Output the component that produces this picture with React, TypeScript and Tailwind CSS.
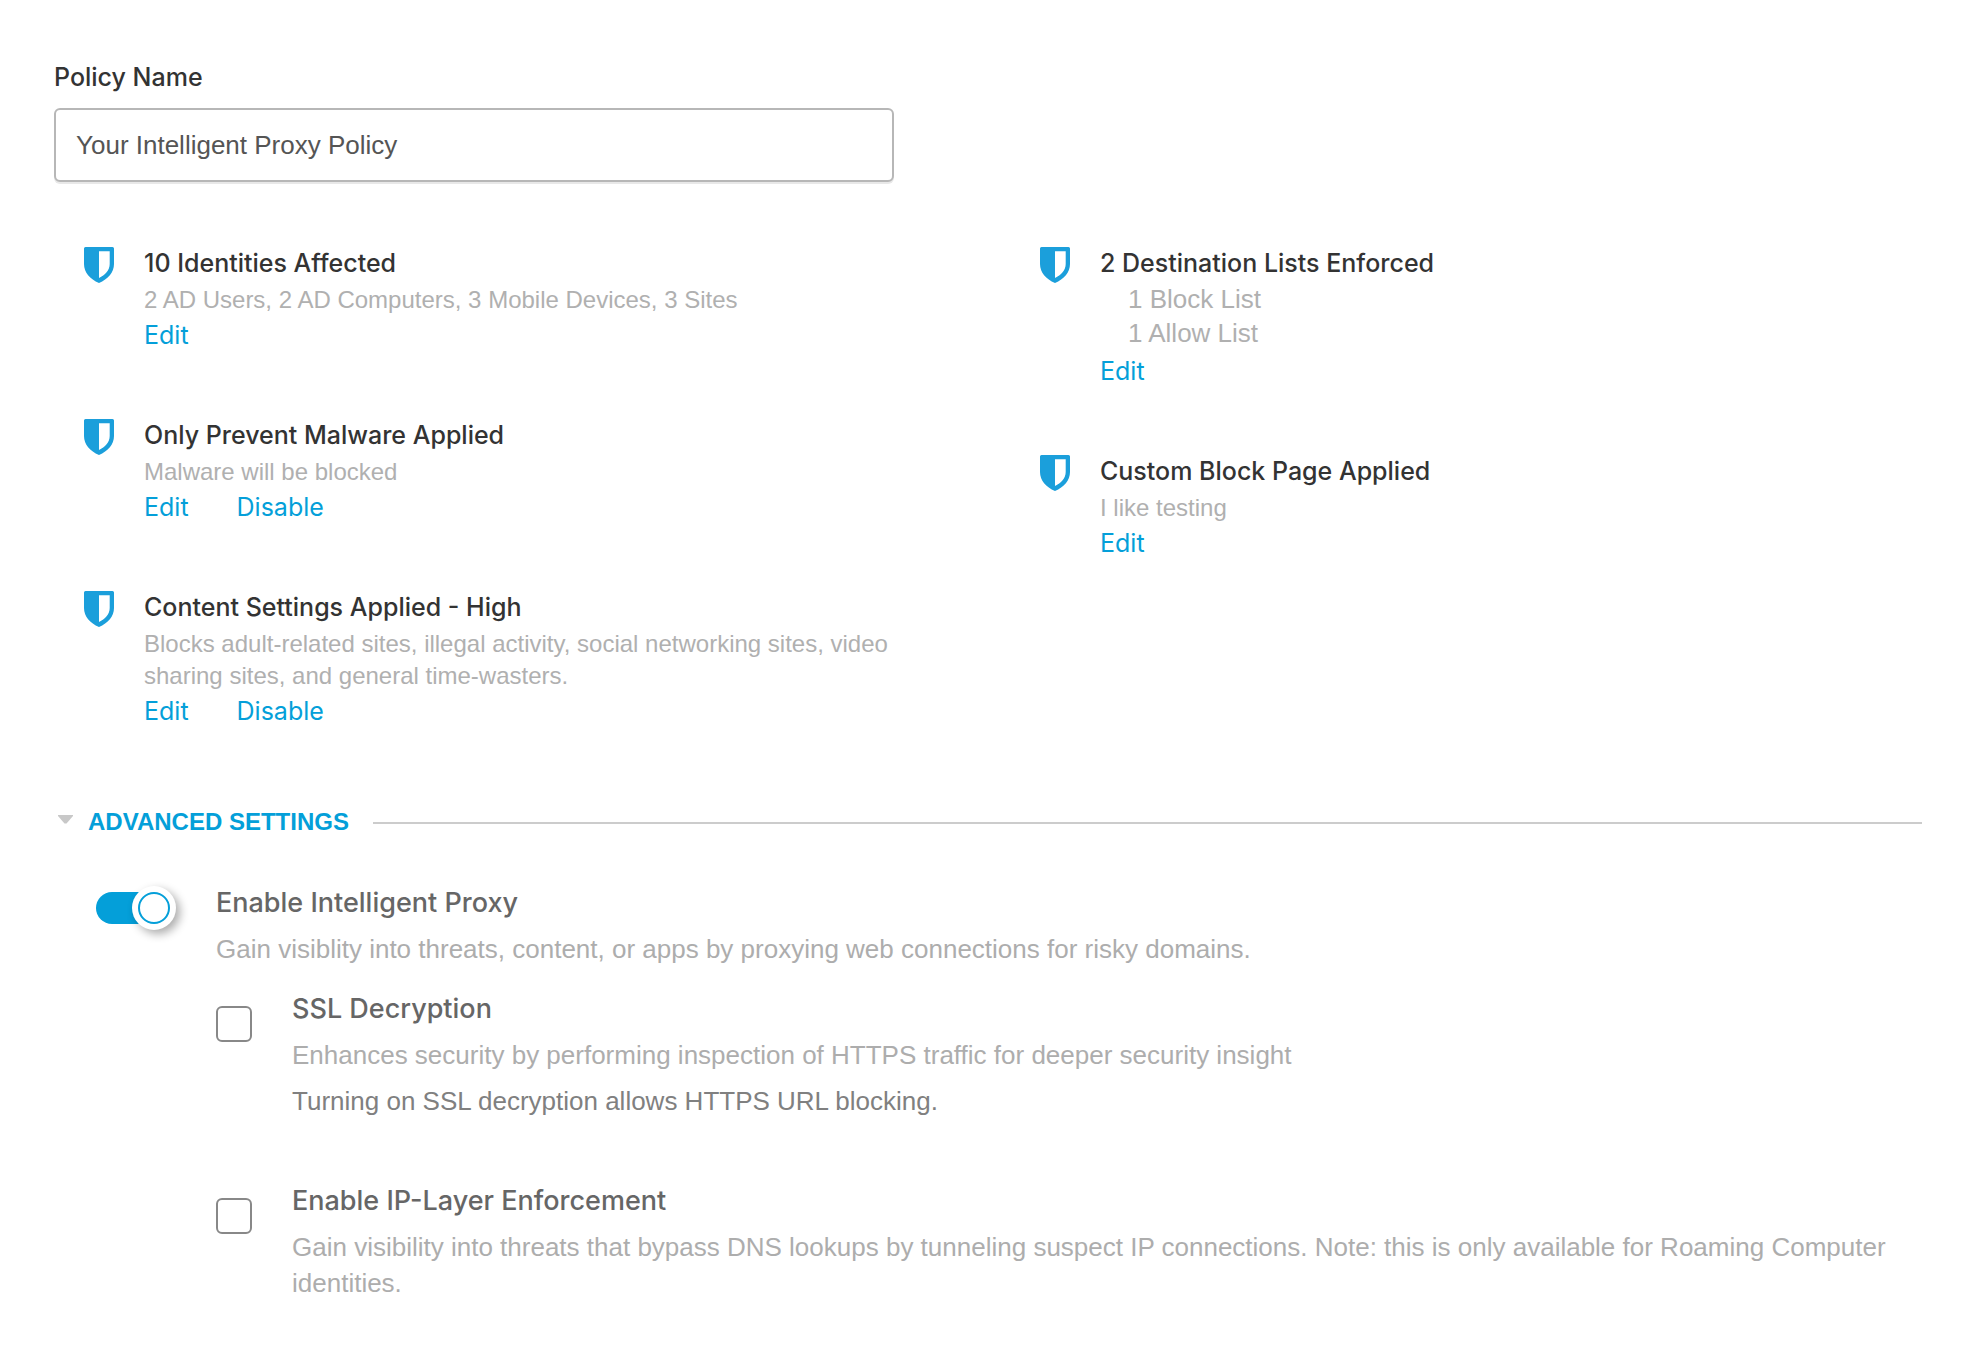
import { useId, useState, type ReactNode } from "react";

function Shield() {
  return (
    <svg viewBox="0 0 30 36" className="mt-0.5 h-9 w-[30px] shrink-0" aria-hidden="true">
      <path
        fill="#1b9fdb"
        fillRule="evenodd"
        d="M1.5 0H28.5A1.5 1.5 0 0 1 30 1.5V17C30 25.5 24 32 15 36C6 32 0 25.5 0 17V1.5A1.5 1.5 0 0 1 1.5 0ZM15 4.200V31C21 27.8 25.700 23.500 25.700 17V4.200Z"
      />
    </svg>
  );
}

type ItemProps = { title: string; children: ReactNode; actions: string[] };

function PolicyItem({ title, children, actions }: ItemProps) {
  return (
    <section className="flex gap-[30px]">
      <Shield />
      <div className="min-w-0">
        <h2 className="text-[25px] leading-9 font-medium text-[#333]">{title}</h2>
        {children}
        <div className="flex gap-12">
          {actions.map((action) => (
            <a key={action} href="#" className="text-[25px] leading-9 text-[#049fd9] hover:underline">
              {action}
            </a>
          ))}
        </div>
      </div>
    </section>
  );
}

function Summary({ children }: { children: ReactNode }) {
  return (
    <p className="mt-[3px] mb-px font-['Liberation_Sans',Arial,sans-serif] text-2xl leading-8 text-[#b0b0b0]">
      {children}
    </p>
  );
}

function Description({ children }: { children: ReactNode }) {
  return (
    <p className="mt-2 font-['Liberation_Sans',Arial,sans-serif] text-[26px] leading-9 text-[#adadad]">
      {children}
    </p>
  );
}

type OptionProps = { label: string; description: string; note?: string };

function CheckOption({ label, description, note }: OptionProps) {
  const id = useId();
  return (
    <div className="flex gap-10">
      <input
        id={id}
        type="checkbox"
        className="mt-[17px] size-9 shrink-0 appearance-none rounded-md border-2 border-[#888] bg-white checked:bg-[#049fd9]"
      />
      <div className="min-w-0">
        <label htmlFor={id} className="block text-[27px] leading-10 font-medium text-[#666]">
          {label}
        </label>
        <Description>{description}</Description>
        {note && (
          <p className="mt-2.5 font-['Liberation_Sans',Arial,sans-serif] text-[26px] leading-9 text-[#808080]">
            {note}
          </p>
        )}
      </div>
    </div>
  );
}

export default function App() {
  const [open, setOpen] = useState(true);
  return (
    <main className="min-h-screen bg-white pt-[59px] pr-[42px] pb-12 pl-[54px] font-['Inter',sans-serif]">
      <label htmlFor="policy-name" className="block text-[25px] leading-9 font-medium text-[#333]">
        Policy Name
      </label>
      <input
        id="policy-name"
        type="text"
        defaultValue="Your Intelligent Proxy Policy"
        className="mt-[13px] block h-[74px] w-[840px] max-w-full rounded-md border-2 border-[#b7b7b7] bg-white px-5 font-['Liberation_Sans',Arial,sans-serif] text-[26px] text-[#555] shadow-[0_2px_0_#e8e8e8] outline-none"
      />

      <div className="mt-[63px] grid grid-cols-[minmax(0,956fr)_minmax(0,882fr)] items-start pl-[30px]">
        <div className="flex flex-col gap-16 pr-28">
          <PolicyItem title="10 Identities Affected" actions={["Edit"]}>
            <Summary>2 AD Users, 2 AD Computers, 3 Mobile Devices, 3 Sites</Summary>
          </PolicyItem>
          <PolicyItem title="Only Prevent Malware Applied" actions={["Edit", "Disable"]}>
            <Summary>Malware will be blocked</Summary>
          </PolicyItem>
          <PolicyItem title="Content Settings Applied - High" actions={["Edit", "Disable"]}>
            <Summary>
              Blocks adult-related sites, illegal activity, social networking sites, video sharing
              sites, and general time-wasters.
            </Summary>
          </PolicyItem>
        </div>
        <div className="flex flex-col gap-16">
          <PolicyItem title="2 Destination Lists Enforced" actions={["Edit"]}>
            <ul className="mt-px mb-[3px] pl-7 font-['Liberation_Sans',Arial,sans-serif] text-[26px] leading-[34px] text-[#b0b0b0]">
              <li>1 Block List</li>
              <li>1 Allow List</li>
            </ul>
          </PolicyItem>
          <PolicyItem title="Custom Block Page Applied" actions={["Edit"]}>
            <Summary>I like testing</Summary>
          </PolicyItem>
        </div>
      </div>

      <div className="mt-[75px] flex items-center">
        <button
          type="button"
          aria-expanded={open}
          onClick={() => setOpen(!open)}
          className="flex items-center pl-1 font-['Liberation_Sans',Arial,sans-serif] text-2xl leading-9 font-bold text-[#049fd9]"
        >
          <svg viewBox="0 0 16 9" className="mr-3.5 mb-1.5 h-[9px] w-4" aria-hidden="true">
            <path d="M0 0H15V1L8.500 8.500H6.500L0 1Z" fill="#c8c8c8" />
          </svg>
          ADVANCED SETTINGS
        </button>
        <div className="mt-0.5 ml-6 h-0.5 flex-1 bg-[#ccc]" />
      </div>

      {open && (
        <div className="mt-[43px] flex gap-10 pl-[42px]">
          <label className="relative mt-[3px] flex h-11 w-20 shrink-0 items-center">
            <input
              type="checkbox"
              role="switch"
              defaultChecked
              aria-labelledby="proxy-title"
              className="peer sr-only"
            />
            <span className="h-8 w-[74px] rounded-full bg-[#bbb] peer-checked:bg-[#049fd9]" />
            <span className="absolute top-0 left-0 flex size-11 items-center justify-center rounded-full bg-white shadow-[4px_4px_10px_rgba(0,0,0,0.33)] peer-checked:left-9">
              <span className="size-8 rounded-full border-2 border-[#049fd9]" />
            </span>
          </label>
          <div className="min-w-0 flex-1">
            <h3 id="proxy-title" className="text-[27px] leading-10 font-medium text-[#666]">
              Enable Intelligent Proxy
            </h3>
            <Description>
              Gain visiblity into threats, content, or apps by proxying web connections for risky
              domains.
            </Description>
            <div className="mt-[22px] flex flex-col gap-[62px]">
              <CheckOption
                label="SSL Decryption"
                description="Enhances security by performing inspection of HTTPS traffic for deeper security insight"
                note="Turning on SSL decryption allows HTTPS URL blocking."
              />
              <CheckOption
                label="Enable IP-Layer Enforcement"
                description="Gain visibility into threats that bypass DNS lookups by tunneling suspect IP connections. Note: this is only available for Roaming Computer identities."
              />
            </div>
          </div>
        </div>
      )}
    </main>
  );
}
